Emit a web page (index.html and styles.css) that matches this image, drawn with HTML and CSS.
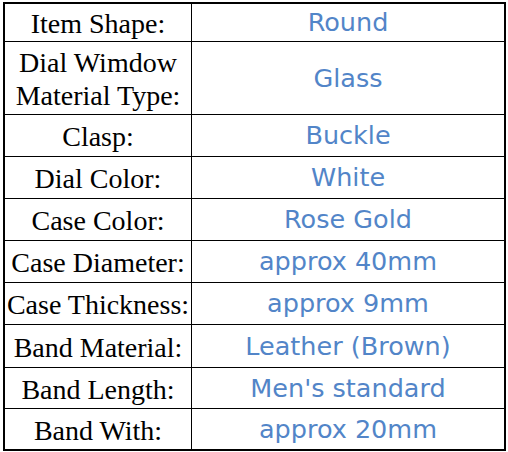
FILE: index.html
```html
<!DOCTYPE html>
<html>
<head>
<meta charset="utf-8">
<link rel="stylesheet" href="styles.css">
</head>
<body>
<table class="spec">
  <tr class="row r-first"><td class="label">Item Shape:</td><td class="value">Round</td></tr>
  <tr class="row r-tall"><td class="label">Dial Wimdow<br>Material Type:</td><td class="value">Glass</td></tr>
  <tr class="row"><td class="label">Clasp:</td><td class="value">Buckle</td></tr>
  <tr class="row"><td class="label">Dial Color:</td><td class="value">White</td></tr>
  <tr class="row"><td class="label">Case Color:</td><td class="value">Rose Gold</td></tr>
  <tr class="row"><td class="label">Case Diameter:</td><td class="value">approx 40mm</td></tr>
  <tr class="row"><td class="label">Case Thickness:</td><td class="value">approx 9mm</td></tr>
  <tr class="row r-43"><td class="label">Band Material:</td><td class="value">Leather (Brown)</td></tr>
  <tr class="row r-41"><td class="label">Band Length:</td><td class="value">Men's standard</td></tr>
  <tr class="row"><td class="label">Band With:</td><td class="value">approx 20mm</td></tr>
</table>
</body>
</html>
```

FILE: styles.css
```css
html, body {
  margin: 0;
  padding: 0;
  background: #ffffff;
}
body {
  padding: 2px 0 0 3px;
}
.spec {
  border-collapse: collapse;
  table-layout: fixed;
  width: 503px;
  border: 2px solid #000;
}
.spec td {
  border: 1px solid #000;
  padding: 0;
  text-align: center;
  vertical-align: middle;
}
.row { height: 42px; }
.r-first { height: 38px; }
.r-tall { height: 73px; }
.r-43 { height: 43px; }
.r-41 { height: 41px; }
.label {
  width: 186px;
  font-family: "Liberation Serif", "Times New Roman", serif;
  font-size: 28px;
  line-height: 33px;
  color: #000;
  padding-top: 3px !important;
}
.value {
  font-family: "DejaVu Sans", sans-serif;
  font-size: 25.5px;
  color: #5285c8;
}
```
